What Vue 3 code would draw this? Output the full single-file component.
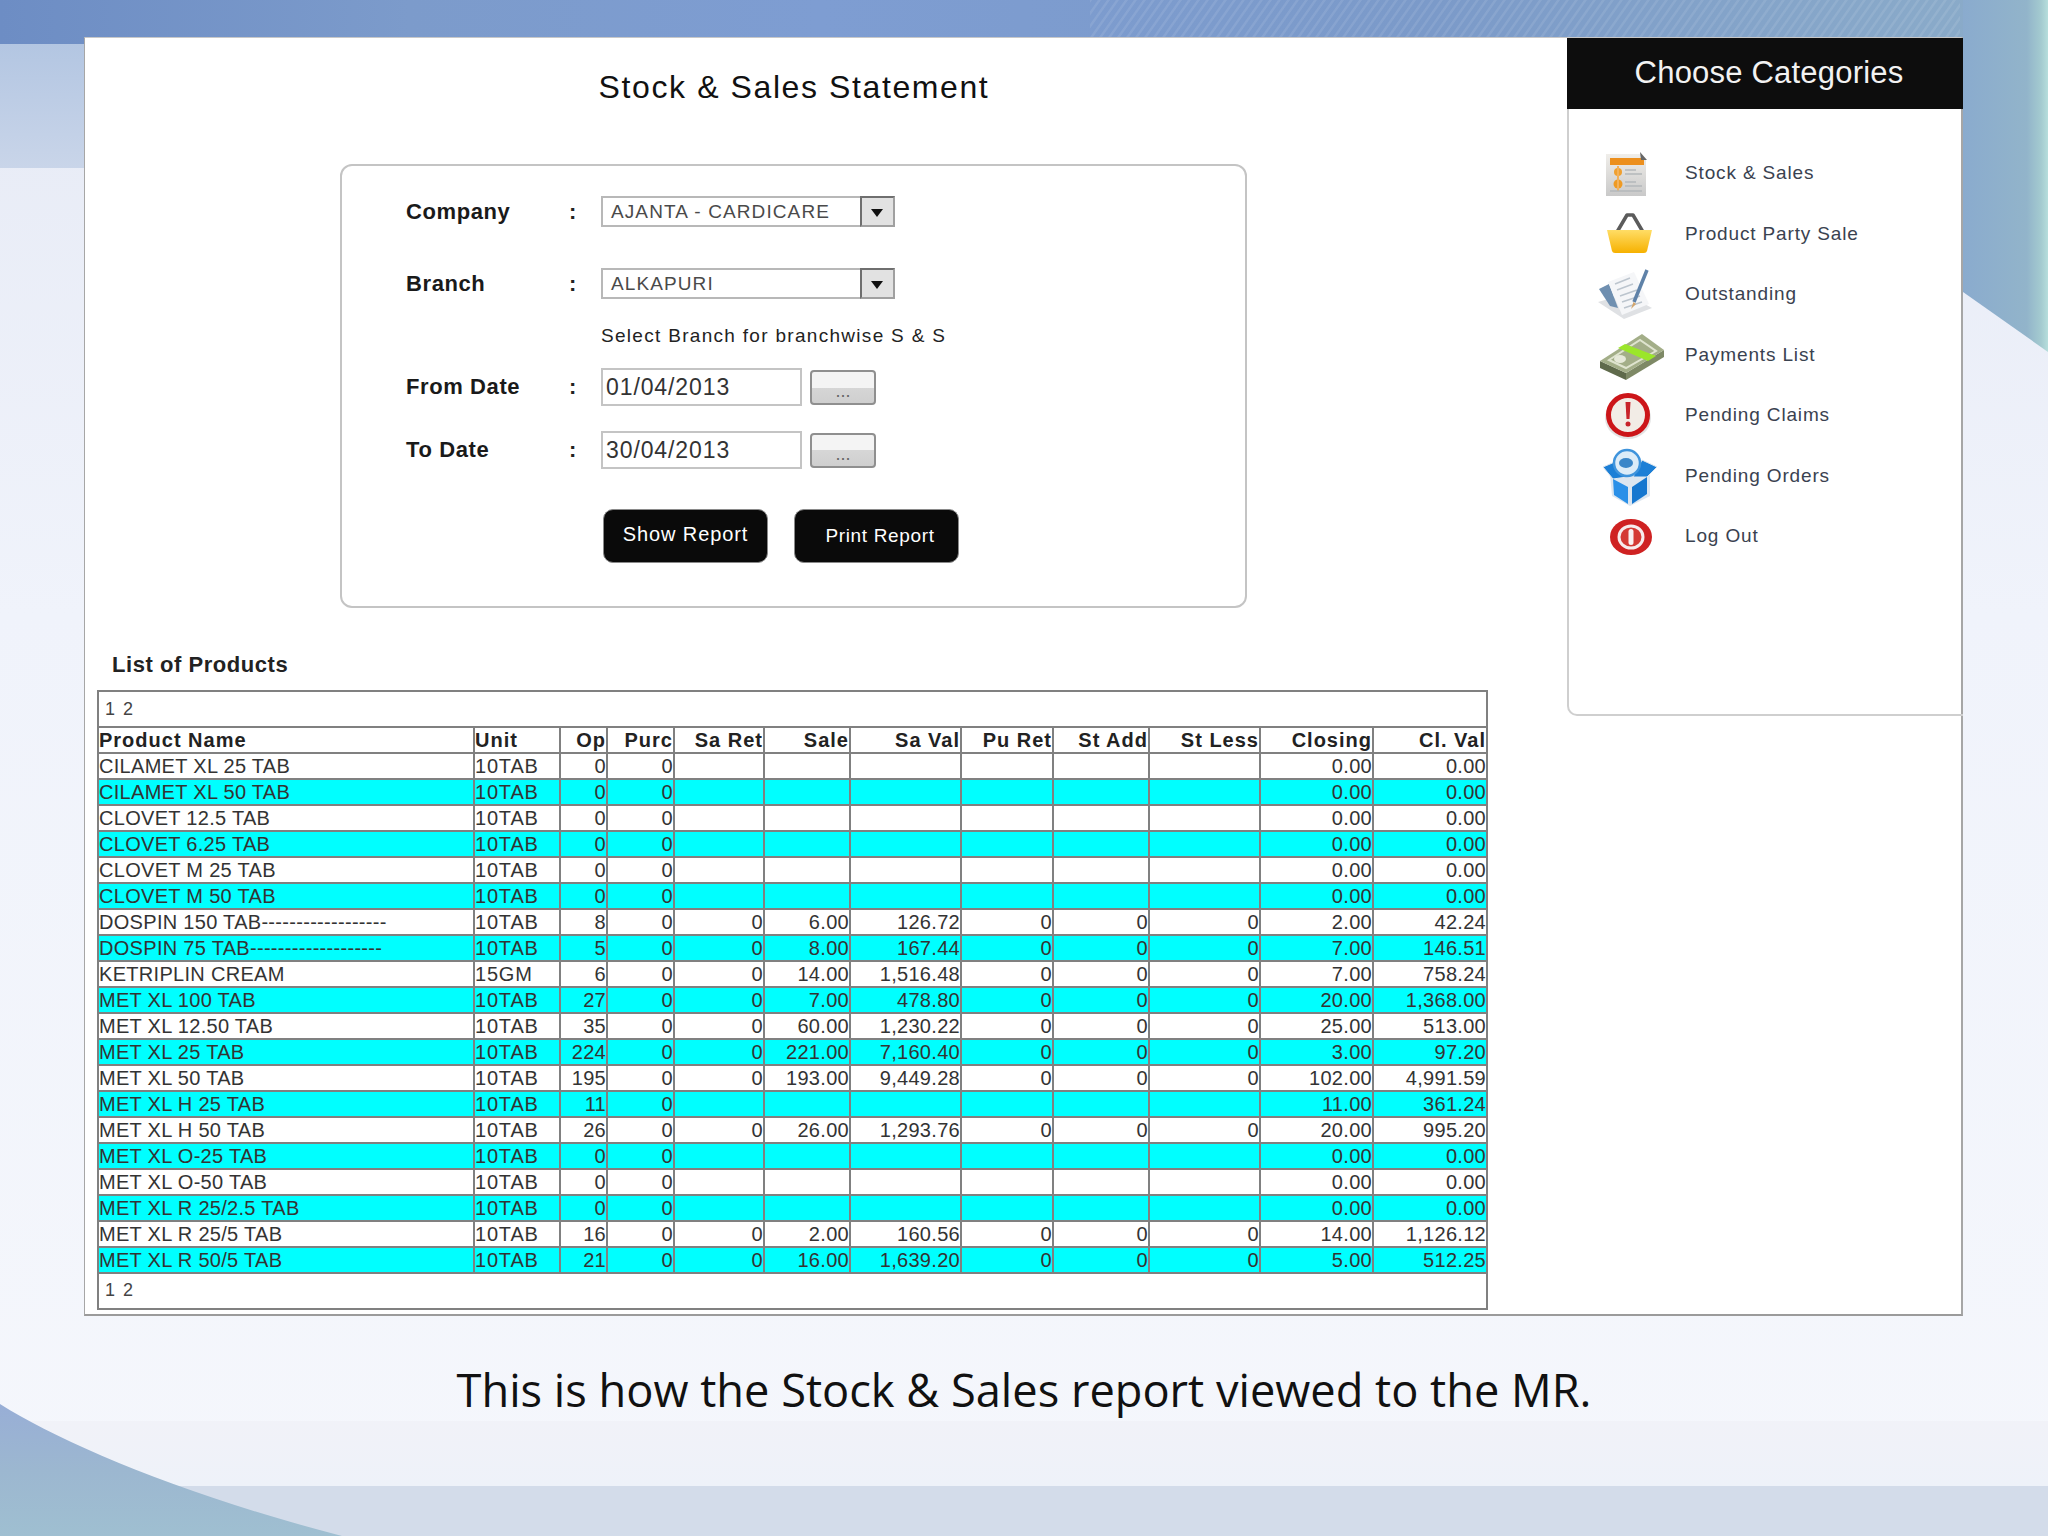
<!-- Stock & Sales report slide: report form, product table and category menu -->
<script setup>
const columns = [
  { label: 'Product Name', width: 376 },
  { label: 'Unit', width: 86 },
  { label: 'Op', width: 47, num: true },
  { label: 'Purc', width: 67, num: true },
  { label: 'Sa Ret', width: 90, num: true },
  { label: 'Sale', width: 86, num: true },
  { label: 'Sa Val', width: 111, num: true },
  { label: 'Pu Ret', width: 92, num: true },
  { label: 'St Add', width: 96, num: true },
  { label: 'St Less', width: 111, num: true },
  { label: 'Closing', width: 113, num: true },
  { label: 'Cl. Val', width: 114, num: true },
]

const rows = [
  ['CILAMET XL 25 TAB', '10TAB', '0', '0', '', '', '', '', '', '', '0.00', '0.00'],
  ['CILAMET XL 50 TAB', '10TAB', '0', '0', '', '', '', '', '', '', '0.00', '0.00'],
  ['CLOVET 12.5 TAB', '10TAB', '0', '0', '', '', '', '', '', '', '0.00', '0.00'],
  ['CLOVET 6.25 TAB', '10TAB', '0', '0', '', '', '', '', '', '', '0.00', '0.00'],
  ['CLOVET M 25 TAB', '10TAB', '0', '0', '', '', '', '', '', '', '0.00', '0.00'],
  ['CLOVET M 50 TAB', '10TAB', '0', '0', '', '', '', '', '', '', '0.00', '0.00'],
  ['DOSPIN 150 TAB------------------', '10TAB', '8', '0', '0', '6.00', '126.72', '0', '0', '0', '2.00', '42.24'],
  ['DOSPIN 75 TAB-------------------', '10TAB', '5', '0', '0', '8.00', '167.44', '0', '0', '0', '7.00', '146.51'],
  ['KETRIPLIN CREAM', '15GM', '6', '0', '0', '14.00', '1,516.48', '0', '0', '0', '7.00', '758.24'],
  ['MET XL 100 TAB', '10TAB', '27', '0', '0', '7.00', '478.80', '0', '0', '0', '20.00', '1,368.00'],
  ['MET XL 12.50 TAB', '10TAB', '35', '0', '0', '60.00', '1,230.22', '0', '0', '0', '25.00', '513.00'],
  ['MET XL 25 TAB', '10TAB', '224', '0', '0', '221.00', '7,160.40', '0', '0', '0', '3.00', '97.20'],
  ['MET XL 50 TAB', '10TAB', '195', '0', '0', '193.00', '9,449.28', '0', '0', '0', '102.00', '4,991.59'],
  ['MET XL H 25 TAB', '10TAB', '11', '0', '', '', '', '', '', '', '11.00', '361.24'],
  ['MET XL H 50 TAB', '10TAB', '26', '0', '0', '26.00', '1,293.76', '0', '0', '0', '20.00', '995.20'],
  ['MET XL O-25 TAB', '10TAB', '0', '0', '', '', '', '', '', '', '0.00', '0.00'],
  ['MET XL O-50 TAB', '10TAB', '0', '0', '', '', '', '', '', '', '0.00', '0.00'],
  ['MET XL R 25/2.5 TAB', '10TAB', '0', '0', '', '', '', '', '', '', '0.00', '0.00'],
  ['MET XL R 25/5 TAB', '10TAB', '16', '0', '0', '2.00', '160.56', '0', '0', '0', '14.00', '1,126.12'],
  ['MET XL R 50/5 TAB', '10TAB', '21', '0', '0', '16.00', '1,639.20', '0', '0', '0', '5.00', '512.25'],
]

const menu = [
  { id: 'stock', label: 'Stock & Sales' },
  { id: 'basket', label: 'Product Party Sale' },
  { id: 'papers', label: 'Outstanding' },
  { id: 'money', label: 'Payments List' },
  { id: 'alert', label: 'Pending Claims' },
  { id: 'box', label: 'Pending Orders' },
  { id: 'power', label: 'Log Out' },
]
</script>

<template>
  <div class="slide">
    <!-- slide artwork behind everything -->
    <svg class="backdrop" viewBox="0 0 2048 1536" preserveAspectRatio="none">
      <defs>
        <linearGradient id="topBand" x1="0" x2="1" y1="0" y2="0">
          <stop offset="0" stop-color="#6d8dc4" />
          <stop offset="0.2" stop-color="#7c9bcb" />
          <stop offset="0.4" stop-color="#7e9dd2" />
          <stop offset="0.7" stop-color="#7b9ac9" />
          <stop offset="1" stop-color="#8cadc9" />
        </linearGradient>
        <linearGradient id="leftBlock" x1="0" x2="0" y1="0" y2="1">
          <stop offset="0" stop-color="#b3c6e2" />
          <stop offset="1" stop-color="#c9d5e9" />
        </linearGradient>
        <linearGradient id="page" x1="0" x2="0" y1="0" y2="1">
          <stop offset="0" stop-color="#e6eaf5" />
          <stop offset="0.4" stop-color="#f0f3fb" />
          <stop offset="1" stop-color="#f5f7fc" />
        </linearGradient>
        <linearGradient id="lower" x1="0" x2="0" y1="0" y2="1">
          <stop offset="0" stop-color="#f1f2f8" />
          <stop offset="1" stop-color="#eef2f9" />
        </linearGradient>
        <linearGradient id="corner" x1="0" x2="0" y1="0" y2="1">
          <stop offset="0" stop-color="#98aed6" />
          <stop offset="0.5" stop-color="#9cb7d0" />
          <stop offset="1" stop-color="#9fbfd1" />
        </linearGradient>
        <linearGradient id="edge" x1="0" x2="1" y1="0" y2="0">
          <stop offset="0" stop-color="#8aabce" />
          <stop offset="0.75" stop-color="#92b4ca" />
          <stop offset="0.92" stop-color="#a4cbd0" />
          <stop offset="1" stop-color="#b6dedc" />
        </linearGradient>
        <pattern id="hatch" width="9" height="44" patternUnits="userSpaceOnUse" patternTransform="skewX(-35)">
          <rect width="3" height="44" fill="#ffffff" opacity="0.09" />
        </pattern>
      </defs>
      <rect width="2048" height="1536" fill="url(#page)" />
      <rect y="44" width="90" height="124" fill="url(#leftBlock)" />
      <rect width="2048" height="44" fill="url(#topBand)" />
      <rect x="1090" width="870" height="44" fill="url(#hatch)" />
      <path d="M1963 0H2048V352L1963 292Z" fill="url(#edge)" />
      <rect y="1421" width="2048" height="65" fill="url(#lower)" />
      <rect y="1486" width="2048" height="50" fill="#d3dcea" />
      <path d="M0 1404C60 1442 180 1494 342 1536H0Z" fill="url(#corner)" />
    </svg>

    <div class="panel">
      <div class="report">
        <h1 class="title">Stock &amp; Sales Statement</h1>

        <div class="form-box">
          <div class="row row-select">
            <span class="label company">Company</span><span class="colon">:</span>
            <div class="select">
              <span>AJANTA - CARDICARE</span>
              <i class="arrow"></i>
            </div>
          </div>
          <div class="row row-select branch">
            <span class="label">Branch</span><span class="colon">:</span>
            <div class="select">
              <span>ALKAPURI</span>
              <i class="arrow"></i>
            </div>
          </div>
          <div class="row hint"><span>Select Branch for branchwise S &amp; S</span></div>
          <div class="row row-date from">
            <span class="label">From Date</span><span class="colon">:</span>
            <div class="date">
              <span class="date-input">01/04/2013</span>
              <button class="date-btn">...</button>
            </div>
          </div>
          <div class="row row-date to">
            <span class="label">To Date</span><span class="colon">:</span>
            <div class="date">
              <span class="date-input">30/04/2013</span>
              <button class="date-btn">...</button>
            </div>
          </div>
          <div class="actions">
            <button class="action show">Show Report</button>
            <button class="action print">Print Report</button>
          </div>
        </div>

        <h2 class="list-title">List of Products</h2>

        <table class="grid">
          <colgroup>
            <col v-for="c in columns" :key="c.label" :style="{ width: c.width + 'px' }" />
          </colgroup>
          <thead>
            <tr class="pager"><td colspan="12"><span>1 2</span></td></tr>
            <tr>
              <th v-for="c in columns" :key="c.label" :class="{ num: c.num }">{{ c.label }}</th>
            </tr>
          </thead>
          <tbody>
            <tr v-for="(r, i) in rows" :key="r[0]" :class="{ alt: i % 2 === 1 }">
              <td v-for="(v, j) in r" :key="j" :class="{ num: columns[j].num }">{{ v }}</td>
            </tr>
          </tbody>
          <tfoot>
            <tr class="pager bottom"><td colspan="12"><span>1 2</span></td></tr>
          </tfoot>
        </table>
      </div>

      <aside class="side">
        <div class="side-head">Choose Categories</div>
        <ul class="menu">
          <li v-for="m in menu" :key="m.id" class="menu-item">
            <svg class="icon" viewBox="0 0 64 64">
              <template v-if="m.id === 'stock'">
                <defs>
                  <linearGradient id="docFill" x1="0" x2="0" y1="0" y2="1">
                    <stop offset="0" stop-color="#f0eeea" />
                    <stop offset="1" stop-color="#c9c9c9" />
                  </linearGradient>
                </defs>
                <path d="M10 13H44L50 19V55H10Z" fill="url(#docFill)" />
                <path d="M14 17H48V24H14Z" fill="#ec8f1d" />
                <path d="M44 11L51 19L45 19Z" fill="#666" />
                <circle cx="22" cy="31" r="4" fill="#f0a030" />
                <circle cx="22" cy="43" r="4.5" fill="#ef9a22" />
                <path d="M22 25V50" stroke="#f3b15a" stroke-width="2" />
                <path d="M29 29H40M29 33H46M29 41H40M29 45H46M14 50H46" stroke="#b4b8ba" stroke-width="1.5" />
              </template>

              <template v-else-if="m.id === 'basket'">
                <defs>
                  <linearGradient id="basketFill" x1="0" x2="0" y1="0" y2="1">
                    <stop offset="0" stop-color="#ffdd66" />
                    <stop offset="1" stop-color="#f6b100" />
                  </linearGradient>
                </defs>
                <path d="M21 30L31 13H37L47 30" fill="none" stroke="#5b5b5b" stroke-width="3.5" stroke-linejoin="round" />
                <path d="M11 28H56L51 49Q50.500 51 48 51H19Q16.500 51 16 49Z" fill="url(#basketFill)" />
              </template>

              <template v-else-if="m.id === 'papers'">
                <path d="M2 40L28 57L56 46L30 32Z" fill="#dfe1e4" />
                <path d="M3 27L13 22L22 46L14 44Z" fill="#6f8fb0" />
                <path d="M12 20L38 10L53 42L26 53Z" fill="#f5f6f8" />
                <path d="M19 22L34 16M21 28L37 22M24 34L41 28M26 40L44 34M28 46L46 40" stroke="#bcc5ce" stroke-width="1.5" />
                <path d="M51 8L38 40" stroke="#5f82a8" stroke-width="3.500" />
                <path d="M37.500 40L35 47L40 42Z" fill="#d4a56b" />
              </template>

              <template v-else-if="m.id === 'money'">
                <path d="M4 38L30 50V57L4 45Z" fill="#5f6a4b" />
                <path d="M30 50L68 27V34L30 57Z" fill="#7e8966" />
                <path d="M4 38L46 11L68 27L30 50Z" fill="#a3ae88" />
                <path d="M13 37L44 17L60 28L30 45Z" fill="none" stroke="#dfe4cf" stroke-width="2" />
                <ellipse cx="24" cy="36" rx="6" ry="4" fill="#e6e9d9" />
                <path d="M22 25L29 21L60 33L52 38Z" fill="#9be62a" />
              </template>

              <template v-else-if="m.id === 'alert'">
                <ellipse cx="32" cy="35" rx="23" ry="21" fill="#c8c8c8" opacity="0.5" />
                <circle cx="32" cy="32" r="19.500" fill="#f2ece6" stroke="#cc1519" stroke-width="5" />
                <path d="M29.500 19H34.500L33.500 36H30.500Z" fill="#c8232b" />
                <circle cx="32" cy="41" r="2.500" fill="#c8232b" />
              </template>

              <template v-else-if="m.id === 'box'">
                <path d="M14 30L54 28V52L34 62L16 52Z" fill="#dce6f0" />
                <path d="M7 23L21 17L31 33L17 35Z" fill="#1c7fd6" stroke="#dfe7ef" stroke-width="1" />
                <path d="M61 23L46 16L37 33L51 33Z" fill="#1c7fd6" stroke="#dfe7ef" stroke-width="1" />
                <circle cx="31" cy="19" r="13" fill="#dcecf8" stroke="#3f94dc" stroke-width="2.500" />
                <ellipse cx="30" cy="19" rx="7" ry="5" fill="#3a86c8" />
                <path d="M17 35L32 43V60L18 51Z" fill="#2a90e8" />
                <path d="M36 43L51 33V50L36 60Z" fill="#1677cf" />
              </template>

              <template v-else>
                <ellipse cx="35" cy="33" rx="21" ry="18" fill="#cf2222" />
                <ellipse cx="35" cy="33" rx="12" ry="11" fill="#d43a34" stroke="#f7ecec" stroke-width="3" />
                <rect x="32.500" y="25" width="5" height="16" rx="2.500" fill="#f8f2f2" />
              </template>
            </svg>
            <span class="menu-label">{{ m.label }}</span>
          </li>
        </ul>
      </aside>
    </div>

    <p class="caption">This is how the Stock &amp; Sales report viewed to the MR.</p>
  </div>
</template>

<style>
body {
  margin: 0;
}
</style>

<style scoped>
.slide {
  position: relative;
  width: 2048px;
  height: 1536px;
  overflow: hidden;
  padding-top: 37px;
  box-sizing: border-box;
  font-family: 'Liberation Sans', Arial, sans-serif;
}

.backdrop {
  position: absolute;
  left: 0;
  top: 0;
  width: 2048px;
  height: 1536px;
}

.panel {
  position: relative;
  display: flex;
  align-items: flex-start;
  width: 1879px;
  height: 1279px;
  margin-left: 84px;
  box-sizing: border-box;
  background: #fff;
  border: 1px solid #a6a6a6;
  border-top-color: #c8c8c8;
  border-bottom: 2px solid #9b9b9b;
  border-right: 2px solid #a6a6a6;
}

.report {
  width: 1482px;
  flex-shrink: 0;
}

.title {
  width: 1418px;
  height: 40px;
  margin: 29px 0 0;
  text-align: center;
  font-size: 32px;
  line-height: 40px;
  font-weight: 400;
  letter-spacing: 1.6px;
  color: #111;
}

.form-box {
  width: 907px;
  height: 444px;
  box-sizing: border-box;
  margin: 57px 0 0 255px;
  padding-top: 30px;
  border: 2px solid #c4c4c4;
  border-radius: 12px;
}

.row {
  display: grid;
  grid-template-columns: 64px 163px 32px 1fr;
  align-items: center;
}
.row .label { grid-column: 2; }
.row-select { height: 31px; }
.branch { margin-top: 41px; }
.row-date { height: 38px; }
.from { margin-top: 20px; }
.to { margin-top: 25px; }

.hint {
  height: 24px;
  margin-top: 25px;
  font-size: 19px;
  letter-spacing: 1.3px;
  color: #222;
}
.hint span { grid-column: 4; }

.label {
  font-size: 22px;
  font-weight: 700;
  letter-spacing: 0.6px;
  color: #1a1a1a;
}
.colon {
  font-size: 22px;
  font-weight: 700;
  color: #222;
}

.select {
  display: flex;
  align-items: center;
  justify-content: space-between;
  width: 294px;
  height: 31px;
  box-sizing: border-box;
  padding-left: 8px;
  border: 2px solid #b8b8b8;
  font-size: 19px;
  letter-spacing: 1.1px;
  color: #4a4a4a;
}
.arrow {
  position: relative;
  display: block;
  width: 35px;
  height: 31px;
  margin: -2px -2px -2px 0;
  box-sizing: border-box;
  background: #e2e2e2;
  border: 2px solid #6f6f6f;
  border-right-color: #a0a0a0;
  border-bottom-color: #a0a0a0;
}
.arrow::after {
  content: '';
  position: absolute;
  left: 9px;
  top: 11px;
  border-left: 6px solid transparent;
  border-right: 6px solid transparent;
  border-top: 8px solid #111;
}

.date {
  display: flex;
  align-items: center;
  gap: 8px;
}
.date-input {
  display: block;
  width: 201px;
  height: 38px;
  box-sizing: border-box;
  padding-left: 3px;
  border: 2px solid #c4c4c4;
  font-size: 23px;
  line-height: 35px;
  letter-spacing: 0.9px;
  color: #333;
}
.date-btn {
  width: 66px;
  height: 35px;
  padding: 9px 0 0;
  border: 2px solid #8f8f8f;
  border-radius: 4px;
  background: linear-gradient(#f4f4f4 0 50%, #d6d6d6 50%, #cfcfcf);
  font-family: inherit;
  font-size: 18px;
  color: #666;
}

.actions {
  display: flex;
  gap: 26px;
  margin: 40px 0 0 261px;
}
.action {
  width: 165px;
  height: 54px;
  padding: 0;
  border: 1px solid #8a8a8a;
  border-radius: 10px;
  background: #0a0a0a;
  color: #fff;
  font-family: inherit;
}
.show {
  font-size: 20px;
  letter-spacing: 0.9px;
  padding-bottom: 4px;
}
.print {
  font-size: 19px;
  letter-spacing: 0.65px;
  padding-left: 7px;
}

.list-title {
  margin: 44px 0 0 27px;
  height: 26px;
  font-size: 22px;
  line-height: 26px;
  font-weight: 700;
  letter-spacing: 0.55px;
  color: #222;
}

.grid {
  width: 1389px;
  margin: 12px 0 0 12px;
  border-collapse: collapse;
  table-layout: fixed;
  font-size: 20px;
  letter-spacing: 0.3px;
  color: #333;
}
.grid th,
.grid td {
  height: 26px;
  box-sizing: border-box;
  padding: 0 0 0 0;
  border: 2px solid #808080;
  text-align: left;
  white-space: nowrap;
  overflow: hidden;
  line-height: 22px;
}
.grid td:nth-child(2) { letter-spacing: 0.8px; }
.grid th {
  font-weight: 700;
  letter-spacing: 1px;
  color: #222;
}
.grid .num { text-align: right; }
.grid .alt td { background: #00ffff; }
.grid .pager td {
  height: 36px;
  padding-left: 6px;
  font-size: 18px;
  letter-spacing: 1.5px;
  color: #444;
}
.grid .bottom td {
  height: 36px;
  padding-bottom: 2px;
}

.side {
  width: 396px;
  height: 678px;
  flex-shrink: 0;
  box-sizing: border-box;
  border-left: 2px solid #cfcfcf;
  border-bottom: 2px solid #cfcfcf;
  border-bottom-left-radius: 10px;
}
.side-head {
  height: 71px;
  margin-left: -2px;
  padding-left: 8px;
  box-sizing: border-box;
  background: #0d0d0d;
  color: #f2f2f2;
  font-size: 31px;
  line-height: 69px;
  letter-spacing: 0.2px;
  text-align: center;
}
.menu {
  margin: 34px 0 0;
  padding: 0;
  list-style: none;
}
.menu-item {
  display: flex;
  align-items: center;
  height: 60.500px;
}
.icon {
  width: 64px;
  height: 64px;
  margin: 0 25px 0 27px;
  flex-shrink: 0;
  overflow: visible;
}
.menu-label {
  font-size: 19px;
  letter-spacing: 0.85px;
  color: #3a4250;
}

.caption {
  position: relative;
  margin: 46px 0 0;
  text-align: center;
  font-family: 'Open Sans', 'Noto Sans', sans-serif;
  font-size: 45.200px;
  line-height: 56px;
  color: #111;
}
</style>
